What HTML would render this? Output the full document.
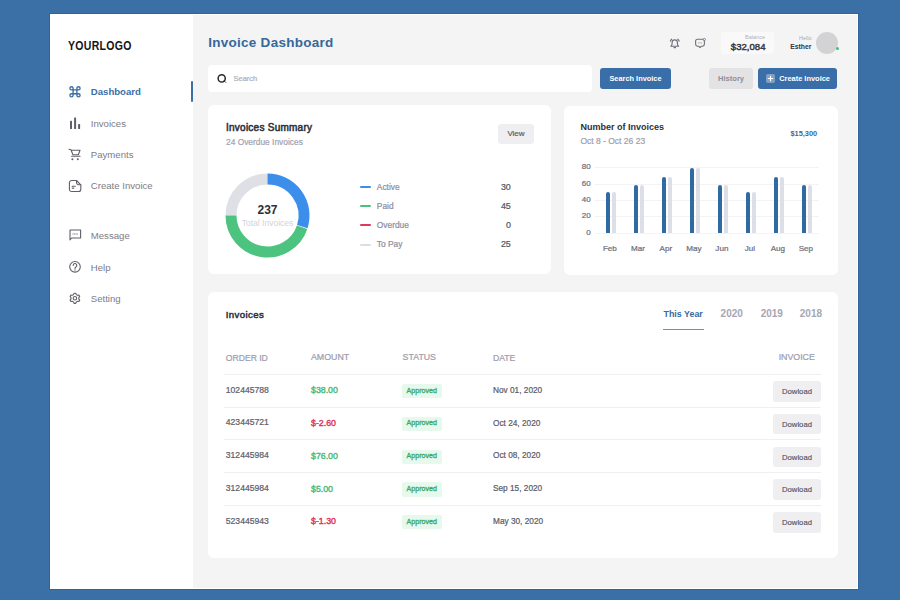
<!DOCTYPE html>
<html><head><meta charset="utf-8"><style>
html,body{margin:0;padding:0;}
body{width:900px;height:600px;background:#3b70a7;position:relative;overflow:hidden;font-family:"Liberation Sans", sans-serif;}
.t{position:absolute;line-height:1;white-space:nowrap;}
.r{position:absolute;}
svg{position:absolute;}
</style></head><body>
<div class="r" style="left:49px;top:13px;width:810px;height:577px;background:#30639a;border-radius:0px;"></div>
<div class="r" style="left:50px;top:14px;width:808px;height:575px;background:#ffffff;border-radius:0px;"></div>
<div class="r" style="left:193px;top:15px;width:664px;height:573px;background:#f4f4f4;border-radius:0px;"></div>
<div class="r" style="left:50px;top:14px;width:143px;height:575px;background:#ffffff;border-radius:0px;"></div>
<div class="t" style="left:68.20px;top:40.09px;font-size:12.3px;font-weight:bold;color:#141414;letter-spacing:0.35px;transform:scaleX(0.855);transform-origin:0 0;">YOURLOGO</div>
<div class="r" style="left:191px;top:81px;width:2px;height:21px;background:#3a6ea5;border-radius:1px;"></div>
<div class="t" style="left:90.80px;top:87.47px;font-size:9.6px;font-weight:bold;color:#3a6ea5;">Dashboard</div>
<div class="t" style="left:90.80px;top:118.77px;font-size:9.6px;font-weight:normal;color:#7d7d85;">Invoices</div>
<div class="t" style="left:90.80px;top:149.67px;font-size:9.6px;font-weight:normal;color:#7d7d85;">Payments</div>
<div class="t" style="left:90.80px;top:181.27px;font-size:9.6px;font-weight:normal;color:#7d7d85;">Create Invoice</div>
<div class="t" style="left:90.80px;top:230.67px;font-size:9.6px;font-weight:normal;color:#7d7d85;">Message</div>
<div class="t" style="left:90.80px;top:262.57px;font-size:9.6px;font-weight:normal;color:#7d7d85;">Help</div>
<div class="t" style="left:90.80px;top:294.07px;font-size:9.6px;font-weight:normal;color:#7d7d85;">Setting</div>
<div class="t" style="left:208.20px;top:35.57px;font-size:13.5px;font-weight:bold;color:#36679c;letter-spacing:0.27px;">Invoice Dashboard</div>
<div class="r" style="left:208px;top:65px;width:384px;height:27px;background:#ffffff;border-radius:4px;"></div>
<div class="t" style="left:233.50px;top:75.35px;font-size:7.5px;font-weight:normal;color:#b0b0bb;-webkit-text-stroke:0.22px #b0b0bb;">Search</div>
<div class="r" style="left:600px;top:68px;width:71px;height:21px;background:#3a6ea8;border-radius:3px;"></div>
<div class="t" style="left:435.50px;width:400px;text-align:center;top:75.13px;font-size:7.4px;font-weight:bold;color:#ffffff;">Search Invoice</div>
<div class="r" style="left:709px;top:68px;width:44px;height:21px;background:#e3e3e5;border-radius:3px;"></div>
<div class="t" style="left:531.00px;width:400px;text-align:center;top:75.07px;font-size:7.6px;font-weight:bold;color:#8f8f98;">History</div>
<div class="r" style="left:758px;top:68px;width:79px;height:21px;background:#3a6ea8;border-radius:3px;"></div>
<div class="r" style="left:766px;top:74px;width:9px;height:9px;background:rgba(255,255,255,0.35);border-radius:2px;"></div>
<div class="t" style="left:604.60px;width:400px;text-align:center;top:75.19px;font-size:7.45px;font-weight:bold;color:#ffffff;">Create Invoice</div>
<div class="r" style="left:721px;top:32px;width:53px;height:22px;background:#f9f9fa;border-radius:3px;"></div>
<div class="t" style="right:135.00px;top:34.64px;font-size:5.5px;font-weight:normal;color:#b0b0ba;">Balance</div>
<div class="t" style="right:134.50px;top:41.87px;font-size:9.6px;font-weight:normal;color:#383844;-webkit-text-stroke:0.45px #383844;">$32,084</div>
<div class="t" style="right:88.50px;top:35.74px;font-size:5.5px;font-weight:normal;color:#aaaab4;">Hello</div>
<div class="t" style="right:88.70px;top:43.54px;font-size:6.8px;font-weight:bold;color:#34343e;">Esther</div>
<div class="r" style="left:816px;top:32px;width:22px;height:22px;background:#d3d3d5;border-radius:11px;"></div>
<div class="r" style="left:835.5px;top:46.5px;width:3.0px;height:3.0px;background:#3ec07c;border-radius:2px;"></div>
<div class="r" style="left:208px;top:105px;width:343px;height:169px;background:#ffffff;border-radius:6px;"></div>
<div class="r" style="left:564px;top:106px;width:274px;height:169px;background:#ffffff;border-radius:6px;"></div>
<div class="r" style="left:208px;top:292px;width:630px;height:266px;background:#ffffff;border-radius:6px;"></div>
<div class="t" style="left:226.00px;top:122.63px;font-size:10px;font-weight:normal;color:#32323e;-webkit-text-stroke:0.55px #32323e;letter-spacing:0.25px;">Invoices Summary</div>
<div class="t" style="left:226.00px;top:137.59px;font-size:8.4px;font-weight:normal;color:#a2a2b2;-webkit-text-stroke:0.2px #a2a2b2;">24 Overdue Invoices</div>
<div class="r" style="left:498px;top:124px;width:36px;height:20px;background:#efeff2;border-radius:3px;"></div>
<div class="t" style="left:316.00px;width:400px;text-align:center;top:130.03px;font-size:8px;font-weight:normal;color:#5f5f6d;-webkit-text-stroke:0.22px #5f5f6d;">View</div>
<div class="t" style="left:67.50px;width:400px;text-align:center;top:203.94px;font-size:12px;font-weight:bold;color:#2e2e38;">237</div>
<div class="t" style="left:67.50px;width:400px;text-align:center;top:218.50px;font-size:8.5px;font-weight:normal;color:#d3d3db;">Total Invoices</div>
<div class="r" style="left:360px;top:186.3px;width:10.5px;height:2.0px;background:#3b8eea;border-radius:1px;"></div>
<div class="t" style="left:376.80px;top:183.09px;font-size:8.4px;font-weight:normal;color:#8e8ea0;-webkit-text-stroke:0.22px #8e8ea0;">Active</div>
<div class="t" style="right:389.20px;top:183.26px;font-size:8.9px;font-weight:normal;color:#55555f;-webkit-text-stroke:0.22px #55555f;">30</div>
<div class="r" style="left:360px;top:205.4px;width:10.5px;height:2.0px;background:#47c27c;border-radius:1px;"></div>
<div class="t" style="left:376.80px;top:202.14px;font-size:8.4px;font-weight:normal;color:#8e8ea0;-webkit-text-stroke:0.22px #8e8ea0;">Paid</div>
<div class="t" style="right:389.20px;top:202.31px;font-size:8.9px;font-weight:normal;color:#55555f;-webkit-text-stroke:0.22px #55555f;">45</div>
<div class="r" style="left:360px;top:224.4px;width:10.5px;height:2.0px;background:#e2365c;border-radius:1px;"></div>
<div class="t" style="left:376.80px;top:221.19px;font-size:8.4px;font-weight:normal;color:#8e8ea0;-webkit-text-stroke:0.22px #8e8ea0;">Overdue</div>
<div class="t" style="right:389.20px;top:221.36px;font-size:8.9px;font-weight:normal;color:#55555f;-webkit-text-stroke:0.22px #55555f;">0</div>
<div class="r" style="left:360px;top:243.5px;width:10.5px;height:2.0px;background:#dedee2;border-radius:1px;"></div>
<div class="t" style="left:376.80px;top:240.24px;font-size:8.4px;font-weight:normal;color:#8e8ea0;-webkit-text-stroke:0.22px #8e8ea0;">To Pay</div>
<div class="t" style="right:389.20px;top:240.41px;font-size:8.9px;font-weight:normal;color:#55555f;-webkit-text-stroke:0.22px #55555f;">25</div>
<div class="t" style="left:580.40px;top:122.88px;font-size:9px;font-weight:bold;color:#30303c;">Number of Invoices</div>
<div class="t" style="left:580.40px;top:136.80px;font-size:8.5px;font-weight:normal;color:#a0a0b0;-webkit-text-stroke:0.22px #a0a0b0;">Oct 8 - Oct 26 23</div>
<div class="t" style="right:82.80px;top:129.73px;font-size:7.4px;font-weight:bold;color:#3a6a9e;">$15,300</div>
<div class="r" style="left:595px;top:167.1px;width:224px;height:1.0px;background:#f3f3f6;border-radius:0px;"></div>
<div class="t" style="right:309.40px;top:163.18px;font-size:8px;font-weight:normal;color:#6e6e7c;-webkit-text-stroke:0.22px #6e6e7c;">80</div>
<div class="r" style="left:595px;top:183.5px;width:224px;height:1.0px;background:#f3f3f6;border-radius:0px;"></div>
<div class="t" style="right:309.40px;top:179.58px;font-size:8px;font-weight:normal;color:#6e6e7c;-webkit-text-stroke:0.22px #6e6e7c;">60</div>
<div class="r" style="left:595px;top:199.9px;width:224px;height:1.0px;background:#f3f3f6;border-radius:0px;"></div>
<div class="t" style="right:309.40px;top:195.98px;font-size:8px;font-weight:normal;color:#6e6e7c;-webkit-text-stroke:0.22px #6e6e7c;">40</div>
<div class="r" style="left:595px;top:216.3px;width:224px;height:1.0px;background:#f3f3f6;border-radius:0px;"></div>
<div class="t" style="right:309.40px;top:212.38px;font-size:8px;font-weight:normal;color:#6e6e7c;-webkit-text-stroke:0.22px #6e6e7c;">20</div>
<div class="r" style="left:595px;top:232.7px;width:224px;height:1.0px;background:#f3f3f6;border-radius:0px;"></div>
<div class="t" style="right:309.40px;top:228.78px;font-size:8px;font-weight:normal;color:#6e6e7c;-webkit-text-stroke:0.22px #6e6e7c;">0</div>
<div class="r" style="left:611.8px;top:192.3px;width:4.300000000000068px;height:40.69999999999999px;background:#dddfe8;border-radius:2px 2px 0 0;"></div>
<div class="r" style="left:605.6px;top:192.3px;width:4.399999999999977px;height:40.69999999999999px;background:#2f6aa3;border-radius:2px 2px 0 0;"></div>
<div class="t" style="left:409.90px;width:400px;text-align:center;top:244.74px;font-size:8.1px;font-weight:normal;color:#6e6e7c;-webkit-text-stroke:0.22px #6e6e7c;">Feb</div>
<div class="r" style="left:639.8px;top:184.75px;width:4.300000000000068px;height:48.25px;background:#dddfe8;border-radius:2px 2px 0 0;"></div>
<div class="r" style="left:633.6px;top:184.75px;width:4.399999999999977px;height:48.25px;background:#2f6aa3;border-radius:2px 2px 0 0;"></div>
<div class="t" style="left:437.90px;width:400px;text-align:center;top:244.74px;font-size:8.1px;font-weight:normal;color:#6e6e7c;-webkit-text-stroke:0.22px #6e6e7c;">Mar</div>
<div class="r" style="left:667.8px;top:177.4px;width:4.300000000000068px;height:55.599999999999994px;background:#dddfe8;border-radius:2px 2px 0 0;"></div>
<div class="r" style="left:661.6px;top:177.4px;width:4.399999999999977px;height:55.599999999999994px;background:#2f6aa3;border-radius:2px 2px 0 0;"></div>
<div class="t" style="left:465.90px;width:400px;text-align:center;top:244.74px;font-size:8.1px;font-weight:normal;color:#6e6e7c;-webkit-text-stroke:0.22px #6e6e7c;">Apr</div>
<div class="r" style="left:695.8px;top:168.1px;width:4.300000000000068px;height:64.9px;background:#dddfe8;border-radius:2px 2px 0 0;"></div>
<div class="r" style="left:689.6px;top:168.1px;width:4.399999999999977px;height:64.9px;background:#2f6aa3;border-radius:2px 2px 0 0;"></div>
<div class="t" style="left:493.90px;width:400px;text-align:center;top:244.74px;font-size:8.1px;font-weight:normal;color:#6e6e7c;-webkit-text-stroke:0.22px #6e6e7c;">May</div>
<div class="r" style="left:723.8px;top:184.75px;width:4.300000000000068px;height:48.25px;background:#dddfe8;border-radius:2px 2px 0 0;"></div>
<div class="r" style="left:717.6px;top:184.75px;width:4.399999999999977px;height:48.25px;background:#2f6aa3;border-radius:2px 2px 0 0;"></div>
<div class="t" style="left:521.90px;width:400px;text-align:center;top:244.74px;font-size:8.1px;font-weight:normal;color:#6e6e7c;-webkit-text-stroke:0.22px #6e6e7c;">Jun</div>
<div class="r" style="left:751.8px;top:192.3px;width:4.300000000000068px;height:40.69999999999999px;background:#dddfe8;border-radius:2px 2px 0 0;"></div>
<div class="r" style="left:745.6px;top:192.3px;width:4.399999999999977px;height:40.69999999999999px;background:#2f6aa3;border-radius:2px 2px 0 0;"></div>
<div class="t" style="left:549.90px;width:400px;text-align:center;top:244.74px;font-size:8.1px;font-weight:normal;color:#6e6e7c;-webkit-text-stroke:0.22px #6e6e7c;">Jul</div>
<div class="r" style="left:779.8px;top:177.4px;width:4.300000000000068px;height:55.599999999999994px;background:#dddfe8;border-radius:2px 2px 0 0;"></div>
<div class="r" style="left:773.6px;top:177.4px;width:4.399999999999977px;height:55.599999999999994px;background:#2f6aa3;border-radius:2px 2px 0 0;"></div>
<div class="t" style="left:577.90px;width:400px;text-align:center;top:244.74px;font-size:8.1px;font-weight:normal;color:#6e6e7c;-webkit-text-stroke:0.22px #6e6e7c;">Aug</div>
<div class="r" style="left:807.8px;top:184.75px;width:4.300000000000068px;height:48.25px;background:#dddfe8;border-radius:2px 2px 0 0;"></div>
<div class="r" style="left:801.6px;top:184.75px;width:4.399999999999977px;height:48.25px;background:#2f6aa3;border-radius:2px 2px 0 0;"></div>
<div class="t" style="left:605.90px;width:400px;text-align:center;top:244.74px;font-size:8.1px;font-weight:normal;color:#6e6e7c;-webkit-text-stroke:0.22px #6e6e7c;">Sep</div>
<div class="t" style="left:225.80px;top:310.27px;font-size:9.6px;font-weight:normal;color:#30303c;-webkit-text-stroke:0.5px #30303c;letter-spacing:0.4px;">Invoices</div>
<div class="t" style="left:663.50px;top:309.66px;font-size:8.9px;font-weight:bold;color:#3a6a9e;">This Year</div>
<div class="r" style="left:663px;top:328.6px;width:41px;height:1.3999999999999773px;background:#6f8fb8;border-radius:0px;"></div>
<div class="t" style="left:720.60px;top:308.53px;font-size:10px;font-weight:bold;color:#a6a6b3;">2020</div>
<div class="t" style="left:760.70px;top:308.53px;font-size:10px;font-weight:bold;color:#a6a6b3;">2019</div>
<div class="t" style="left:799.80px;top:308.53px;font-size:10px;font-weight:bold;color:#a6a6b3;">2018</div>
<div class="t" style="left:225.80px;top:353.52px;font-size:8.6px;font-weight:normal;color:#9d9dad;-webkit-text-stroke:0.22px #9d9dad;">ORDER ID</div>
<div class="t" style="left:311.00px;top:353.35px;font-size:8.8px;font-weight:normal;color:#9d9dad;-webkit-text-stroke:0.22px #9d9dad;">AMOUNT</div>
<div class="t" style="left:402.60px;top:352.75px;font-size:8.8px;font-weight:normal;color:#9d9dad;-webkit-text-stroke:0.22px #9d9dad;">STATUS</div>
<div class="t" style="left:493.00px;top:353.52px;font-size:8.6px;font-weight:normal;color:#9d9dad;-webkit-text-stroke:0.22px #9d9dad;">DATE</div>
<div class="t" style="right:85.20px;top:353.35px;font-size:8.8px;font-weight:normal;color:#9d9dad;-webkit-text-stroke:0.22px #9d9dad;">INVOICE</div>
<div class="r" style="left:224px;top:373.7px;width:597px;height:1.0px;background:#f0f0f3;border-radius:0px;"></div>
<div class="r" style="left:224px;top:406.5px;width:597px;height:1.0px;background:#f0f0f3;border-radius:0px;"></div>
<div class="r" style="left:224px;top:439.3px;width:597px;height:1.0px;background:#f0f0f3;border-radius:0px;"></div>
<div class="r" style="left:224px;top:472.1px;width:597px;height:1.0px;background:#f0f0f3;border-radius:0px;"></div>
<div class="r" style="left:224px;top:504.9px;width:597px;height:1.0px;background:#f0f0f3;border-radius:0px;"></div>
<div class="t" style="left:225.80px;top:385.72px;font-size:8.6px;font-weight:normal;color:#5e5e6c;-webkit-text-stroke:0.22px #5e5e6c;">102445788</div>
<div class="t" style="left:311.00px;top:386.35px;font-size:8.8px;font-weight:normal;color:#4cbb7a;-webkit-text-stroke:0.4px #4cbb7a;">$38.00</div>
<div class="r" style="left:401.7px;top:384.0px;width:39.900000000000034px;height:14.399999999999977px;background:#e7f8ed;border-radius:2px;"></div>
<div class="t" style="left:221.80px;width:400px;text-align:center;top:387.59px;font-size:7.1px;font-weight:normal;color:#3aa866;-webkit-text-stroke:0.3px #3aa866;">Approved</div>
<div class="t" style="left:493.00px;top:386.90px;font-size:8.27px;font-weight:normal;color:#5a5a68;-webkit-text-stroke:0.2px #5a5a68;">Nov 01, 2020</div>
<div class="r" style="left:773px;top:381.2px;width:48px;height:20.5px;background:#efeff2;border-radius:3px;"></div>
<div class="t" style="left:597.00px;width:400px;text-align:center;top:388.08px;font-size:7.7px;font-weight:normal;color:#555563;-webkit-text-stroke:0.15px #555563;">Dowload</div>
<div class="t" style="left:225.80px;top:418.47px;font-size:8.6px;font-weight:normal;color:#5e5e6c;-webkit-text-stroke:0.22px #5e5e6c;">423445721</div>
<div class="t" style="left:311.00px;top:419.10px;font-size:8.8px;font-weight:normal;color:#e0345a;-webkit-text-stroke:0.4px #e0345a;">$-2.60</div>
<div class="r" style="left:401.7px;top:416.8px;width:39.900000000000034px;height:14.300000000000011px;background:#e7f8ed;border-radius:2px;"></div>
<div class="t" style="left:221.80px;width:400px;text-align:center;top:420.34px;font-size:7.1px;font-weight:normal;color:#3aa866;-webkit-text-stroke:0.3px #3aa866;">Approved</div>
<div class="t" style="left:493.00px;top:419.65px;font-size:8.27px;font-weight:normal;color:#5a5a68;-webkit-text-stroke:0.2px #5a5a68;">Oct 24, 2020</div>
<div class="r" style="left:773px;top:413.9px;width:48px;height:20.5px;background:#efeff2;border-radius:3px;"></div>
<div class="t" style="left:597.00px;width:400px;text-align:center;top:420.83px;font-size:7.7px;font-weight:normal;color:#555563;-webkit-text-stroke:0.15px #555563;">Dowload</div>
<div class="t" style="left:225.80px;top:451.22px;font-size:8.6px;font-weight:normal;color:#5e5e6c;-webkit-text-stroke:0.22px #5e5e6c;">312445984</div>
<div class="t" style="left:311.00px;top:451.85px;font-size:8.8px;font-weight:normal;color:#4cbb7a;-webkit-text-stroke:0.4px #4cbb7a;">$76.00</div>
<div class="r" style="left:401.7px;top:449.5px;width:39.900000000000034px;height:14.399999999999977px;background:#e7f8ed;border-radius:2px;"></div>
<div class="t" style="left:221.80px;width:400px;text-align:center;top:453.09px;font-size:7.1px;font-weight:normal;color:#3aa866;-webkit-text-stroke:0.3px #3aa866;">Approved</div>
<div class="t" style="left:493.00px;top:452.40px;font-size:8.27px;font-weight:normal;color:#5a5a68;-webkit-text-stroke:0.2px #5a5a68;">Oct 08, 2020</div>
<div class="r" style="left:773px;top:446.7px;width:48px;height:20.5px;background:#efeff2;border-radius:3px;"></div>
<div class="t" style="left:597.00px;width:400px;text-align:center;top:453.58px;font-size:7.7px;font-weight:normal;color:#555563;-webkit-text-stroke:0.15px #555563;">Dowload</div>
<div class="t" style="left:225.80px;top:483.97px;font-size:8.6px;font-weight:normal;color:#5e5e6c;-webkit-text-stroke:0.22px #5e5e6c;">312445984</div>
<div class="t" style="left:311.00px;top:484.60px;font-size:8.8px;font-weight:normal;color:#4cbb7a;-webkit-text-stroke:0.4px #4cbb7a;">$5.00</div>
<div class="r" style="left:401.7px;top:482.2px;width:39.900000000000034px;height:14.400000000000034px;background:#e7f8ed;border-radius:2px;"></div>
<div class="t" style="left:221.80px;width:400px;text-align:center;top:485.84px;font-size:7.1px;font-weight:normal;color:#3aa866;-webkit-text-stroke:0.3px #3aa866;">Approved</div>
<div class="t" style="left:493.00px;top:485.15px;font-size:8.27px;font-weight:normal;color:#5a5a68;-webkit-text-stroke:0.2px #5a5a68;">Sep 15, 2020</div>
<div class="r" style="left:773px;top:479.4px;width:48px;height:20.5px;background:#efeff2;border-radius:3px;"></div>
<div class="t" style="left:597.00px;width:400px;text-align:center;top:486.33px;font-size:7.7px;font-weight:normal;color:#555563;-webkit-text-stroke:0.15px #555563;">Dowload</div>
<div class="t" style="left:225.80px;top:516.72px;font-size:8.6px;font-weight:normal;color:#5e5e6c;-webkit-text-stroke:0.22px #5e5e6c;">523445943</div>
<div class="t" style="left:311.00px;top:517.35px;font-size:8.8px;font-weight:normal;color:#e0345a;-webkit-text-stroke:0.4px #e0345a;">$-1.30</div>
<div class="r" style="left:401.7px;top:515.0px;width:39.900000000000034px;height:14.399999999999977px;background:#e7f8ed;border-radius:2px;"></div>
<div class="t" style="left:221.80px;width:400px;text-align:center;top:518.59px;font-size:7.1px;font-weight:normal;color:#3aa866;-webkit-text-stroke:0.3px #3aa866;">Approved</div>
<div class="t" style="left:493.00px;top:517.90px;font-size:8.27px;font-weight:normal;color:#5a5a68;-webkit-text-stroke:0.2px #5a5a68;">May 30, 2020</div>
<div class="r" style="left:773px;top:512.2px;width:48px;height:20.5px;background:#efeff2;border-radius:3px;"></div>
<div class="t" style="left:597.00px;width:400px;text-align:center;top:519.08px;font-size:7.7px;font-weight:normal;color:#555563;-webkit-text-stroke:0.15px #555563;">Dowload</div>
<svg width="900" height="600" viewBox="0 0 900 600" style="left:0;top:0;"><path d="M231.00 215.50 A36.5 36.5 0 0 1 267.50 179.00" stroke="#dfe0e6" stroke-width="11" fill="none"/><path d="M302.09 227.14 A36.5 36.5 0 0 1 231.00 215.50" stroke="#4cc47f" stroke-width="11" fill="none"/><path d="M267.50 179.00 A36.5 36.5 0 0 1 302.29 226.54" stroke="#3b8eea" stroke-width="11" fill="none"/><g stroke="#3a6ea5" stroke-width="1.35" fill="none" stroke-linecap="round"><path d="M73.1 89.9 H76.9 V93.7 H73.1 Z"/><path d="M73.1 89.9 V88.30000000000001 A1.6 1.6 0 1 0 71.5 89.9 H73.1"/><path d="M76.9 89.9 V88.30000000000001 A1.6 1.6 0 1 1 78.5 89.9 H76.9"/><path d="M73.1 93.7 V95.3 A1.6 1.6 0 1 1 71.5 93.7 H73.1"/><path d="M76.9 93.7 V95.3 A1.6 1.6 0 1 0 78.5 93.7 H76.9"/></g><g fill="#606068"><rect x="70" y="120.8" width="2" height="8.1" rx="0.5"/><rect x="74.1" y="117.5" width="2" height="11.4" rx="0.5"/><rect x="78.1" y="123.9" width="2" height="5" rx="0.5"/></g><g stroke="#606068" stroke-width="1.1" fill="none" stroke-linejoin="round" stroke-linecap="round"><path d="M69 149.2 L71 149.8 L72.9 154.8 H78.4 L80 150.3 H71.3"/><path d="M71.6 156.2 H80"/></g><circle cx="72.4" cy="159.2" r="1" fill="#606068"/><circle cx="77.8" cy="159.2" r="1" fill="#606068"/><g stroke="#606068" stroke-width="1.1" fill="none" stroke-linejoin="round" stroke-linecap="round"><path d="M76.5 180.5 H71.7 A2.3 2.3 0 0 0 69.4 182.8 V189.2 A2.3 2.3 0 0 0 71.7 191.5 H78.5 A2.3 2.3 0 0 0 80.8 189.2 V184.8 Z"/><path d="M76.5 180.5 V182.6 A2.2 2.2 0 0 0 78.7 184.8 H80.8"/><path d="M72.2 186.2 H75.3 M72.2 188.1 H73.8"/></g><g stroke="#606068" stroke-width="1.1" fill="none" stroke-linejoin="round"><path d="M70 239.8 V230 H80.6 V238 H71.6 Z"/></g><path d="M72.5 234 H78" stroke="#606068" stroke-width="0.9" stroke-dasharray="1 0.6"/><circle cx="75" cy="266.8" r="5.3" stroke="#606068" stroke-width="1.1" fill="none"/><path d="M73.2 265.4 A1.8 1.8 0 1 1 75.9 266.9 C75.2 267.3 75 267.7 75 268.4" stroke="#606068" stroke-width="1.1" fill="none" stroke-linecap="round"/><circle cx="75" cy="270" r="0.65" fill="#606068"/><path d="M74.09 293.21 L75.71 293.21 L76.32 294.61 L77.39 295.23 L78.90 295.06 L79.71 296.45 L78.80 297.68 L78.80 298.92 L79.71 300.15 L78.90 301.54 L77.39 301.37 L76.32 301.99 L75.71 303.39 L74.09 303.39 L73.48 301.99 L72.41 301.37 L70.90 301.54 L70.09 300.15 L71.00 298.92 L71.00 297.68 L70.09 296.45 L70.90 295.06 L72.41 295.23 L73.48 294.61Z" stroke="#606068" stroke-width="1.1" fill="none" stroke-linejoin="round"/><circle cx="74.9" cy="298.3" r="1.75" stroke="#606068" stroke-width="1.1" fill="none"/><circle cx="221.7" cy="78.4" r="3.55" stroke="#26262e" stroke-width="1.5" fill="none"/><path d="M224.2 80.9 L225.6 82.3" stroke="#26262e" stroke-width="1" stroke-linecap="round"/><path d="M770.5 75.8 V81.2 M767.8 78.5 H773.2" stroke="#ffffff" stroke-width="1.2"/><g stroke="#6f6f79" stroke-width="1.15" fill="none" stroke-linejoin="round" stroke-linecap="round"><path d="M670.9 46.2 Q672.1 45.3 672.1 43.8 V42.6 A2.65 2.65 0 0 1 677.4 42.6 V43.8 Q677.4 45.3 678.6 46.2 Z"/><path d="M674 47.6 H675.5"/><path d="M670.4 41.2 Q670.7 39.9 671.7 39.2 M679.1 41.2 Q678.8 39.9 677.8 39.2"/></g><g stroke="#6f6f79" stroke-width="1.1" fill="none" stroke-linejoin="round"><path d="M697.6 39.3 H702.4 A2 2 0 0 1 704.4 41.3 V44 Q704.4 46 702.4 46.3 H701.2 L700 47.5 L698.8 46.3 H697.6 Q695.6 46 695.6 44 V41.3 A2 2 0 0 1 697.6 39.3 Z"/></g><circle cx="704.3" cy="39.5" r="1.1" fill="#f4f4f4" stroke="#6f6f79" stroke-width="0.8"/><path d="M698.2 42.9 H701.8" stroke="#6f6f79" stroke-width="0.7" stroke-dasharray="0.9 0.45"/></svg>
</body></html>
